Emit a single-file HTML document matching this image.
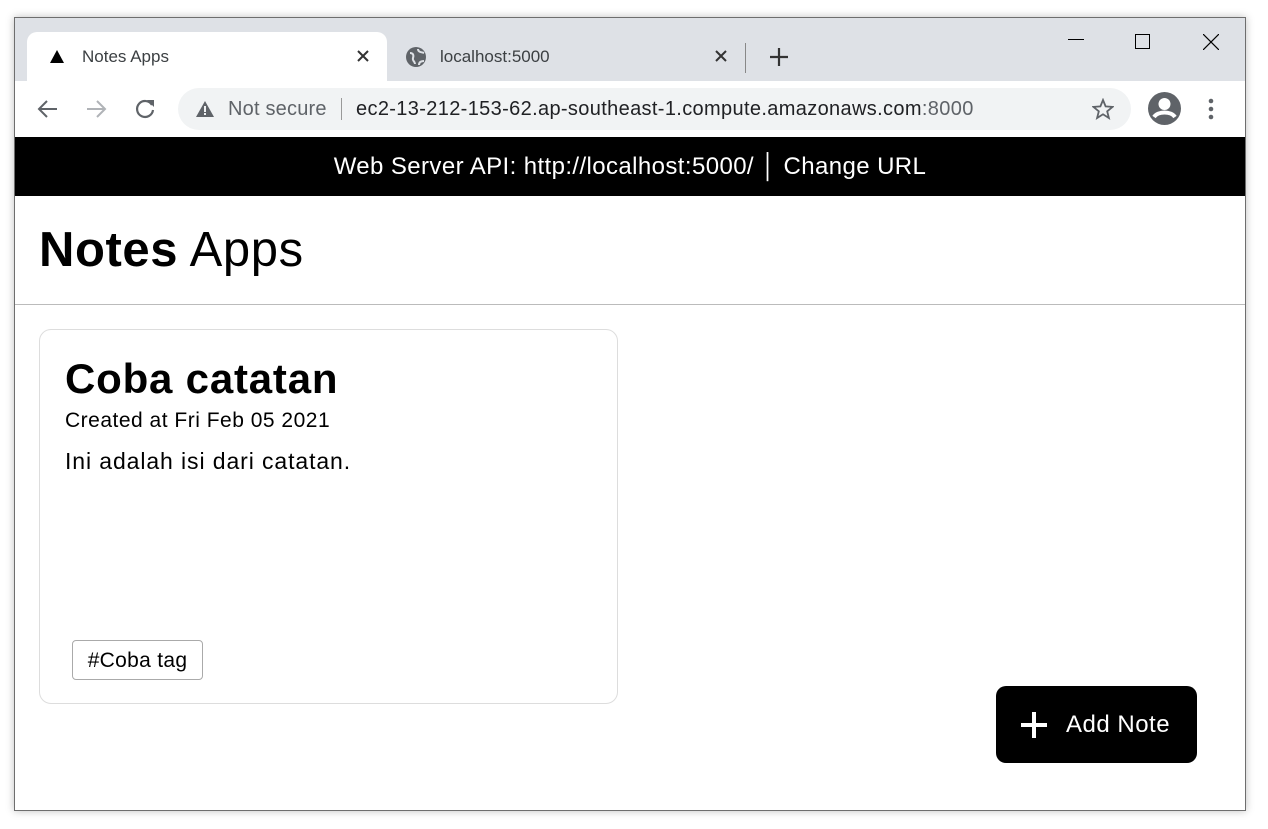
<!DOCTYPE html>
<html><head><style>
*{box-sizing:border-box;margin:0;padding:0}
body{width:1268px;height:829px;background:#fff;position:relative;overflow:hidden;font-family:"Liberation Sans",Arial,sans-serif}
.win{position:absolute;left:14px;top:17px;width:1232px;height:794px;border:1px solid #6e6e6e;box-shadow:0 0 8px rgba(0,0,0,.25);background:#fff;overflow:hidden}
.strip{position:absolute;left:0;top:0;width:100%;height:63px;background:#dee1e6}
.tab{position:absolute;left:12px;top:14px;width:360px;height:49px;background:#fff;border-radius:10px 10px 0 0}
.t{position:absolute;font-size:17px;color:#3c4043}
.tool{position:absolute;top:63px;left:0;width:100%;height:56px;background:#fff}
.addr{position:absolute;left:163px;top:7px;width:953px;height:42px;background:#f1f3f4;border-radius:21px}
.banner{position:absolute;top:119px;left:0;width:100%;height:59px;background:#000;color:#fff;font-size:24px;letter-spacing:0.4px;text-align:center;line-height:60px}
.hdr{position:absolute;top:178px;left:0;width:100%;height:109px;border-bottom:1px solid #bbb}
.card{position:absolute;left:24px;top:311px;width:579px;height:375px;border:1px solid #ddd;border-radius:12px}
.btn{position:absolute;left:981px;top:668px;width:201px;height:77px;background:#000;border-radius:10px;color:#fff;font-size:24px;letter-spacing:0.5px}
</style></head><body>
<div class="win">
<div class="strip">
<div class="tab"></div>
<svg style="position:absolute;left:35px;top:32px" width="14" height="13"><polygon points="7,0 14,13 0,13" fill="#000"/></svg>
<div class="t" style="left:67px;top:29px">Notes Apps</div>
<svg style="position:absolute;left:342px;top:32px" width="12" height="12"><path d="M1 1L11 11M11 1L1 11" stroke="#333" stroke-width="2"/></svg>
<svg style="position:absolute;left:391px;top:29px" width="20" height="20"><circle cx="10" cy="10" r="10" fill="#5f6368"/><path d="M4 6c3 0 4 2 3 5s2 3 2 6M12 2c0 3 3 3 6 4M13 18c0-3 2-4 5-4" stroke="#dee1e6" stroke-width="2" fill="none"/></svg>
<div class="t" style="left:425px;top:29px">localhost:5000</div>
<svg style="position:absolute;left:700px;top:32px" width="12" height="12"><path d="M1 1L11 11M11 1L1 11" stroke="#333" stroke-width="2"/></svg>
<div style="position:absolute;left:730px;top:25px;width:1px;height:30px;background:#888"></div>
<svg style="position:absolute;left:754px;top:29px" width="20" height="20"><path d="M10 1V19M1 10H19" stroke="#333" stroke-width="2.2"/></svg>
<div style="position:absolute;left:1053px;top:21px;width:16px;height:1px;background:#000"></div>
<div style="position:absolute;left:1120px;top:16px;width:15px;height:15px;border:1px solid #000"></div>
<svg style="position:absolute;left:1188px;top:16px" width="16" height="16"><path d="M0 0L16 16M16 0L0 16" stroke="#000" stroke-width="1.2"/></svg>
</div>
<div class="tool">
<svg style="position:absolute;left:22px;top:17px" width="22" height="22"><path d="M20 11H3M10 3L2 11L10 19" stroke="#5f6368" stroke-width="2" fill="none"/></svg>
<svg style="position:absolute;left:70px;top:17px" width="22" height="22"><path d="M2 11H19M12 3L20 11L12 19" stroke="#b0b3b7" stroke-width="2" fill="none"/></svg>
<svg style="position:absolute;left:118px;top:16px" width="24" height="24"><path d="M19 8A8 8 0 1 0 20 13" stroke="#5f6368" stroke-width="2.2" fill="none"/><polygon points="14,3 21,3 21,10" fill="#5f6368"/></svg>
<div class="addr">
<svg style="position:absolute;left:18px;top:13px" width="18" height="16"><polygon points="9,0 18,16 0,16" fill="#5f6368"/><rect x="8" y="5" width="2" height="6" fill="#f1f3f4"/><rect x="8" y="12" width="2" height="2" fill="#f1f3f4"/></svg>
<div class="t" style="left:50px;top:10px;font-size:20px;color:#5f6368;letter-spacing:0.2px">Not secure</div>
<div style="position:absolute;left:163px;top:10px;width:1px;height:22px;background:#999"></div>
<div class="t" style="left:178px;top:10px;font-size:20px;color:#202124;letter-spacing:0.35px">ec2-13-212-153-62.ap-southeast-1.compute.amazonaws.com<span style="color:#5f6368">:8000</span></div>
<svg style="position:absolute;left:914px;top:10px" width="22" height="22"><polygon points="11,2 13.6,8.4 20.5,8.9 15.2,13.3 16.9,20 11,16.3 5.1,20 6.8,13.3 1.5,8.9 8.4,8.4" stroke="#5f6368" stroke-width="1.8" fill="none"/></svg>
</div>
<svg style="position:absolute;left:1133px;top:11px" width="33" height="33"><circle cx="16.5" cy="16.5" r="16.5" fill="#5f6368"/><circle cx="16.5" cy="12" r="6" fill="#fff"/><path d="M6 25c4-6 17-6 21 0" stroke="#fff" stroke-width="4" fill="none"/></svg>
<svg style="position:absolute;left:1193px;top:17px" width="6" height="22"><circle cx="3" cy="3" r="2.3" fill="#5f6368"/><circle cx="3" cy="11" r="2.3" fill="#5f6368"/><circle cx="3" cy="19" r="2.3" fill="#5f6368"/></svg>
</div>
<div class="banner">Web Server API: http://localhost:5000/ │ Change URL</div>
<div class="hdr"><div style="position:absolute;left:24px;top:26px;font-size:49px;letter-spacing:0.6px;color:#000"><b>Notes</b> Apps</div></div>
<div class="card">
<div style="position:absolute;left:25px;top:25px;font-size:42px;font-weight:bold;letter-spacing:0.8px">Coba catatan</div>
<div style="position:absolute;left:25px;top:79px;font-size:21px;letter-spacing:0.5px">Created at Fri Feb 05 2021</div>
<div style="position:absolute;left:25px;top:118px;font-size:23px;letter-spacing:0.9px">Ini adalah isi dari catatan.</div>
<div style="position:absolute;left:32px;top:310px;height:40px;width:131px;border:1px solid #aaa;border-radius:4px;font-size:21px;line-height:40px;text-align:center;letter-spacing:0.3px">#Coba tag</div>
</div>
<div class="btn">
<svg style="position:absolute;left:24px;top:25px" width="28" height="28"><path d="M14 1V27M1 14H27" stroke="#fff" stroke-width="4"/></svg>
<div style="position:absolute;left:70px;top:25px">Add Note</div>
</div>
</div>
</body></html>
